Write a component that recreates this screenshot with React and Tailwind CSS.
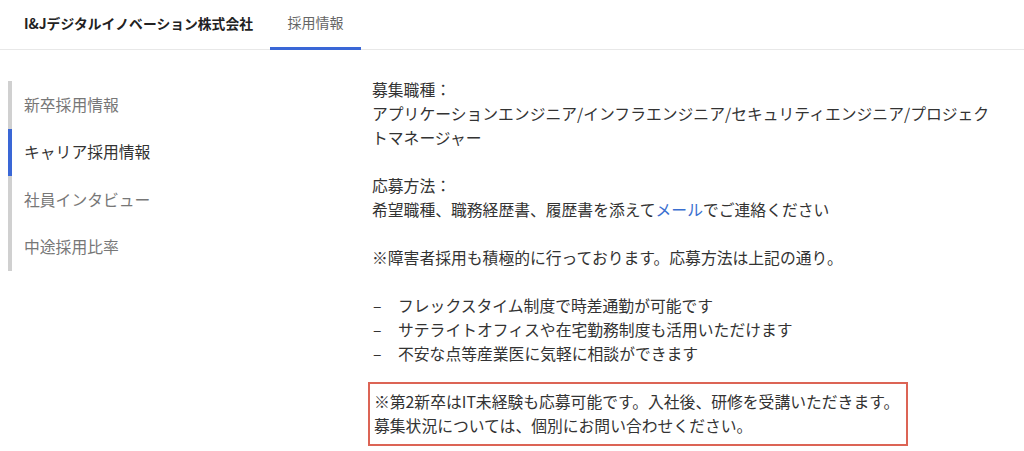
export default function App() {
  const font = { fontFamily: '"Noto Sans CJK JP", "Noto Sans", sans-serif' };
  const items = [
    { label: "新卒採用情報", active: false },
    { label: "キャリア採用情報", active: true },
    { label: "社員インタビュー", active: false },
    { label: "中途採用比率", active: false },
  ];
  return (
    <div className="w-[1024px] h-[451px] bg-white overflow-hidden text-[#333]" style={font}>
      <header className="flex h-[50px] border-b border-[#e8e8e8] pl-[24px]">
        <div className="flex items-center text-[13.8px] font-bold text-[#222] pb-[3px]">
          I&amp;Jデジタルイノベーション株式会社
        </div>
        <div className="ml-[17px] w-[91px] flex items-center justify-center text-[14px] text-[#666] border-b-[3px] border-[#3a67d6] -mb-px pb-[2px]">
          採用情報
        </div>
      </header>
      <main className="flex pt-[28px]">
        <nav className="ml-[8px] w-[364px] mt-[3px] flex flex-col">
          {items.map((it) => (
            <div
              key={it.label}
              className={
                "h-[47.5px] flex items-center pl-[12px] border-l-4 text-[15.8px] " +
                (it.active ? "border-[#3a67d6] text-[#333]" : "border-[#d0d0d0] text-[#777]")
              }
            >
              {it.label}
            </div>
          ))}
        </nav>
        <section className="w-[632px] text-[15.8px] leading-[24px] text-[#333]">
          <p>募集職種：</p>
          <p>アプリケーションエンジニア/インフラエンジニア/セキュリティエンジニア/プロジェクトマネージャー</p>
          <p className="mt-[24px]">応募方法：</p>
          <p>
            希望職種、職務経歴書、履歴書を添えて<span className="text-[#3b6fd0]">メール</span>でご連絡ください
          </p>
          <p className="mt-[24px]">※障害者採用も積極的に行っております。応募方法は上記の通り。</p>
          <ul className="mt-[24px]">
            {[
              "フレックスタイム制度で時差通勤が可能です",
              "サテライトオフィスや在宅勤務制度も活用いただけます",
              "不安な点等産業医に気軽に相談ができます",
            ].map((t) => (
              <li key={t} className="flex">
                <span className="w-[26px] pl-[1px]">–</span>
                <span>{t}</span>
              </li>
            ))}
          </ul>
          <div className="mt-[16px] -ml-[4px] w-[540px] border-2 border-[#dc6455] px-[4px] py-[6px]">
            <p>※第2新卒はIT未経験も応募可能です。入社後、研修を受講いただきます。</p>
            <p>募集状況については、個別にお問い合わせください。</p>
          </div>
        </section>
      </main>
    </div>
  );
}
